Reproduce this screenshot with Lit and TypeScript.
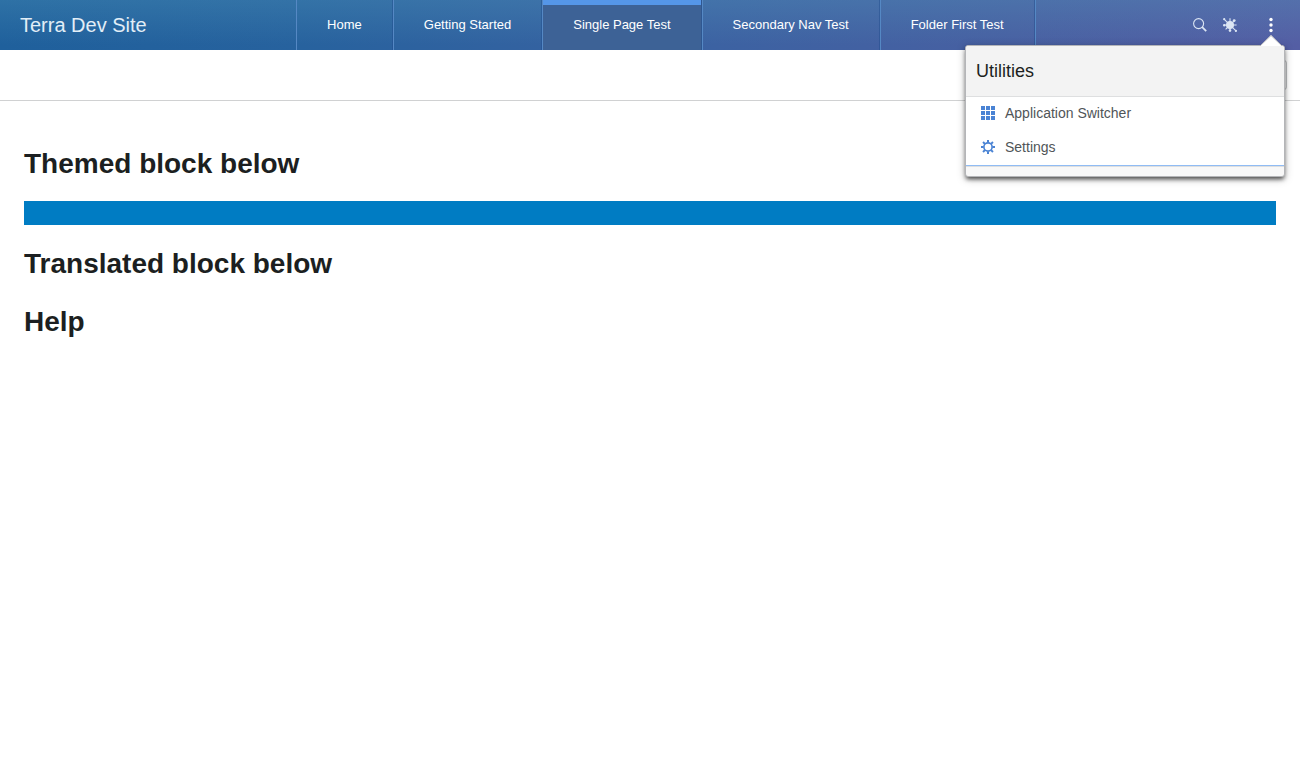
import { LitElement, html, css, svg } from "lit";
import { customElement, property } from "lit/decorators.js";

const rays = [0, 45, 90, 135, 180, 225, 270, 315];

const searchIcon = svg`<svg viewBox="0 0 14 14" width="14" height="14" aria-hidden="true">
  <circle cx="5.6" cy="5.6" r="5" fill="none" stroke="currentColor" stroke-width="1.1"/>
  <path d="M9.2 9.2 L13.2 13.2" stroke="currentColor" stroke-width="1.8"/>
</svg>`;

const burstIcon = svg`<svg viewBox="0 0 14 14" width="14" height="14" aria-hidden="true">
  <circle cx="7" cy="7" r="4" fill="currentColor"/>
  <path d="M0.8 0.8 L13.2 13.2 M11.2 2.8 L2.6 11.4 M7 0.2 V13 M0.5 7 H13.6" stroke="currentColor" stroke-width="1.1"/>
  <g fill="currentColor">
    <circle cx="1.2" cy="1.2" r="1.1"/><circle cx="11.2" cy="2.6" r="1.4"/>
    <circle cx="1.3" cy="7.2" r="1.2"/><circle cx="7" cy="12.6" r="1.3"/>
    <circle cx="12.9" cy="12.9" r="1.1"/>
  </g>
</svg>`;

const dotsIcon = svg`<svg viewBox="0 0 4 16" width="4" height="16" aria-hidden="true" fill="currentColor">
  <circle cx="2" cy="2.5" r="1.7"/><circle cx="2" cy="8" r="1.7"/><circle cx="2" cy="13.5" r="1.7"/>
</svg>`;

const gridIcon = svg`<svg viewBox="0 0 14 14" width="14" height="14" aria-hidden="true" fill="currentColor">
  ${[0, 5, 10].map((y) => [0, 5, 10].map((x) => svg`<rect x=${x} y=${y} width="4" height="4"/>`))}
</svg>`;

const gearIcon = svg`<svg viewBox="0 0 14 14" width="14" height="14" aria-hidden="true">
  <circle cx="7" cy="7" r="4.1" fill="none" stroke="currentColor" stroke-width="1.6"/>
  ${rays.map((a) => svg`<path d="M7 0 V2.6" stroke="currentColor" stroke-width="2" transform="rotate(${a} 7 7)"/>`)}
</svg>`;

@customElement("utility-menu")
export class UtilityMenu extends LitElement {
  static styles = css`
    :host { display: block; }
    .panel {
      border: 1px solid #b4b5b8;
      border-radius: 3px;
      background: #f8f8f8;
      box-shadow: 0 3px 4px -1px rgba(0, 0, 0, 0.65), 0 2px 8px rgba(0, 0, 0, 0.25);
    }
    .arrow {
      position: absolute;
      right: 3px;
      bottom: 100%;
      margin-bottom: -1px;
      display: block;
    }
    .title {
      margin: 0;
      padding: 0 10px;
      font-size: 18px;
      line-height: 50px;
      font-weight: 400;
      color: #1c1f21;
      background: #f3f3f3;
      border-bottom: 1px solid #dedfe0;
      border-radius: 2px 2px 0 0;
    }
    .list { margin: 0; padding: 0; list-style: none; background: #fff; }
    .item {
      box-sizing: border-box;
      display: flex;
      align-items: center;
      gap: 10px;
      width: 100%;
      height: 34px;
      padding: 0 15px 2px;
      border: 0;
      background: none;
      font: inherit;
      font-size: 14px;
      color: #505558;
      text-align: left;
    }
    .item svg { color: #4a83d4; flex: none; }
    .footer {
      height: 10px;
      border-top: 1px solid #90bcf4;
      box-shadow: inset 0 1px #dedfe0;
    }
  `;

  render() {
    return html`
      <svg class="arrow" width="22" height="11" viewBox="0 0 22 11" aria-hidden="true">
        <path d="M0 11 L11 0 L22 11 Z" fill="#fff"/>
        <path d="M0 11 L11 0.5 L22 11" fill="none" stroke="#b4b5b8"/>
      </svg>
      <section class="panel" aria-label="Utilities">
        <h2 class="title">Utilities</h2>
        <ul class="list">
          <li><button class="item">${gridIcon}<span>Application Switcher</span></button></li>
          <li><button class="item">${gearIcon}<span>Settings</span></button></li>
        </ul>
        <div class="footer"></div>
      </section>
    `;
  }
}

@customElement("app-root")
export class AppRoot extends LitElement {
  @property() active = "Single Page Test";

  private tabs = ["Home", "Getting Started", "Single Page Test", "Secondary Nav Test", "Folder First Test"];

  static styles = css`
    :host {
      display: block;
      min-height: 100vh;
      background: #fff;
      color: #1c1f21;
      font-family: "Liberation Sans", Arial, sans-serif;
    }
    * { box-sizing: border-box; }
    .header {
      position: relative;
      display: flex;
      height: 50px;
      color: #fff;
      background:
        linear-gradient(to bottom, rgba(85, 158, 190, 0.28), rgba(85, 158, 190, 0) 90%),
        linear-gradient(to right, #1f609c 0%, #27629e 23%, #3c62a2 55%, #4860a2 78%, #545ea4 100%);
    }
    .brand {
      padding: 0 20px;
      font-size: 20px;
      line-height: 50px;
      color: #e2eef7;
      white-space: nowrap;
    }
    .nav { flex: 1; display: flex; justify-content: center; }
    .tabs { display: flex; border-right: 1px solid #5588c4; }
    .tab {
      padding: 0 30px;
      font-size: 13px;
      line-height: 50px;
      color: #fff;
      text-decoration: none;
      white-space: nowrap;
      border-left: 1px solid #5588c4;
      border-right: 1px solid rgba(30, 75, 140, 0.45);
    }
    .tab.active { background: #3d6296; box-shadow: inset 0 5px #5596e8; }
    .tools {
      display: flex;
      align-items: center;
      justify-content: flex-end;
      width: 135px;
      padding-right: 14px;
    }
    .tool {
      display: flex;
      align-items: center;
      justify-content: center;
      width: 30px;
      height: 50px;
      padding: 0;
      border: 0;
      background: none;
      color: #dce6f4;
    }
    .more { margin-left: 11px; color: #fff; }
    .toolbar {
      display: flex;
      align-items: center;
      justify-content: flex-end;
      height: 51px;
      padding: 0 13px;
      border-bottom: 1px solid #d0d1d2;
    }
    .toolbar-button {
      width: 40px;
      height: 30px;
      border: 1px solid #c0c2c4;
      border-radius: 3px;
      background: #f4f4f4;
    }
    .menu {
      position: absolute;
      top: 45px;
      right: 15px;
      width: 320px;
      z-index: 1;
    }
    .main { padding: 44px 24px; }
    .heading { margin: 0; font-size: 28px; line-height: 38px; font-weight: 700; }
    .block { height: 24px; margin: 18px 0 20px; background: #007cc3; }
    .heading + .heading { margin-top: 20px; }
  `;

  render() {
    return html`
      <header class="header">
        <div class="brand">Terra Dev Site</div>
        <nav class="nav" aria-label="Primary">
          <div class="tabs">
            ${this.tabs.map(
              (t) => html`<a class="tab ${t === this.active ? "active" : ""}" href="#">${t}</a>`
            )}
          </div>
        </nav>
        <div class="tools">
          <button class="tool" aria-label="Search">${searchIcon}</button>
          <button class="tool" aria-label="Theme">${burstIcon}</button>
          <button class="tool more" aria-label="Utilities">${dotsIcon}</button>
        </div>
        <utility-menu class="menu"></utility-menu>
      </header>
      <div class="toolbar">
        <button class="toolbar-button" aria-label="Page settings"></button>
      </div>
      <main class="main">
        <h1 class="heading">Themed block below</h1>
        <div class="block"></div>
        <h1 class="heading">Translated block below</h1>
        <h1 class="heading">Help</h1>
      </main>
    `;
  }
}
